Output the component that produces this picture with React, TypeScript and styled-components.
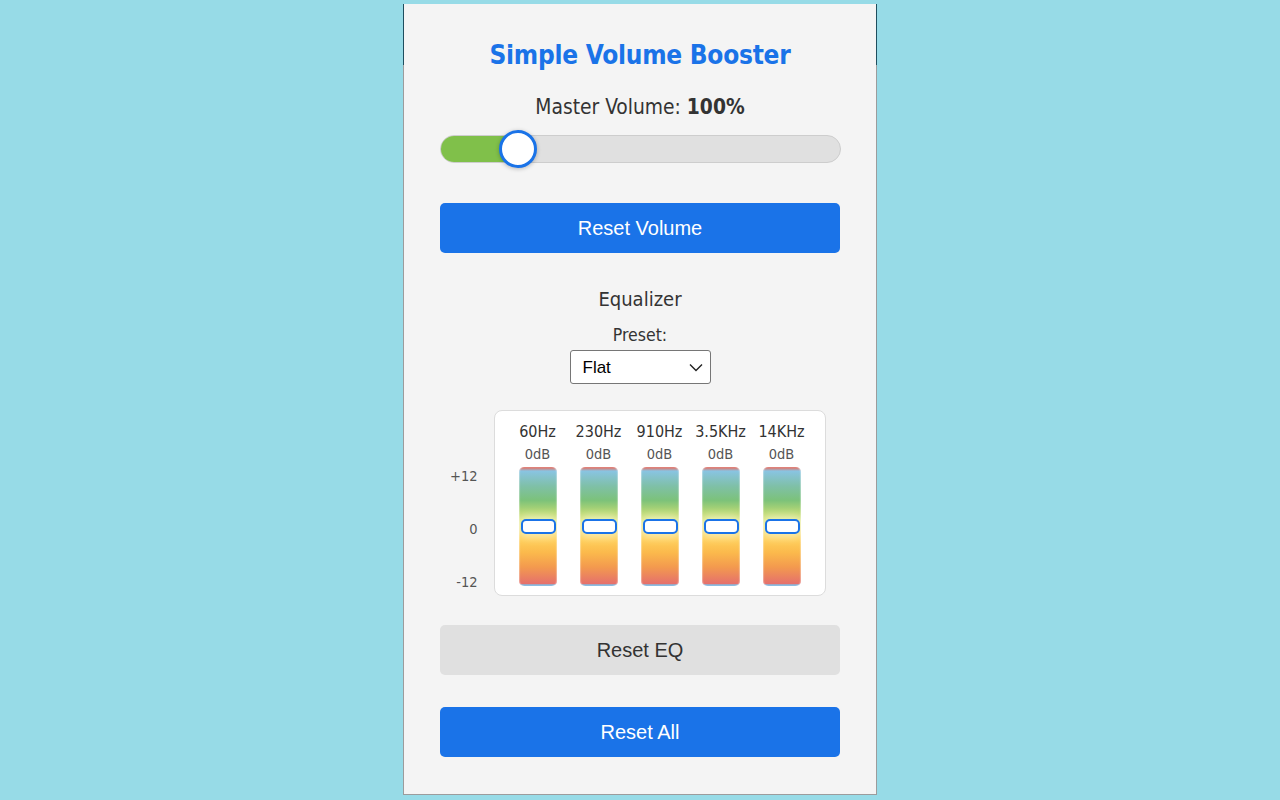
import { useState } from "react";
import styled, { createGlobalStyle } from "styled-components";

const GlobalStyle = createGlobalStyle`
  html, body {
    margin: 0;
    padding: 0;
    background: #97dbe7;
    height: 100%;
  }
  body {
    font-family: "DejaVu Sans Condensed", "DejaVu Sans", sans-serif;
  }
`;

const Page = styled.div`
  display: flex;
  justify-content: center;
  padding-top: 4px;
`;

const Panel = styled.div`
  position: relative;
  width: 400px;
  padding: 36px 36px 37px;
  background: #f4f4f4;
  border: 1px solid #9c9c9c;
  border-top: none;
  display: flex;
  flex-direction: column;
  align-items: center;

  &::before,
  &::after {
    content: "";
    position: absolute;
    top: 0;
    width: 1px;
    height: 61px;
    background: #1f4e5e;
  }
  &::before {
    left: -1px;
  }
  &::after {
    right: -1px;
  }
`;

const Title = styled.h1`
  margin: 0;
  height: 30px;
  line-height: 30px;
  font-size: 26px;
  font-weight: bold;
  color: #1a73e8;
  letter-spacing: -0.25px;
`;

const MasterLabel = styled.div`
  margin-top: 25px;
  height: 24px;
  line-height: 24px;
  font-size: 20.8px;
  color: #333;

  b {
    font-weight: bold;
  }
`;

const SliderWrap = styled.div`
  margin-top: 11px;
  width: 401px;
  height: 38px;
  display: flex;
  align-items: center;
  position: relative;
`;

const Track = styled.div`
  position: relative;
  width: 100%;
  height: 28px;
  box-sizing: border-box;
  border: 1px solid #cdcdcd;
  border-radius: 14px;
  background: #e0e0e0;
  overflow: hidden;
`;

const Fill = styled.div`
  height: 100%;
  background: #80c04a;
`;

const Knob = styled.div`
  position: absolute;
  top: 0;
  width: 38px;
  height: 38px;
  margin-left: -19px;
  box-sizing: border-box;
  border-radius: 50%;
  background: #fff;
  border: 3px solid #1a73e8;
  box-shadow: 0 1px 4px rgba(0, 0, 0, 0.25);
`;

const Button = styled.button<{ $variant?: "primary" | "secondary" }>`
  width: 100%;
  height: 50px;
  border: none;
  border-radius: 5px;
  font-family: "Liberation Sans", Arial, sans-serif;
  font-size: 20px;
  cursor: pointer;
  background: ${(p) => (p.$variant === "secondary" ? "#e0e0e0" : "#1a73e8")};
  color: ${(p) => (p.$variant === "secondary" ? "#333" : "#fff")};
  margin-top: ${(p) => (p.$variant === "secondary" ? "29px" : "32px")};
`;

const ResetVolume = styled(Button)`
  margin-top: 35px;
`;

const SectionTitle = styled.div`
  margin-top: 34px;
  height: 24px;
  line-height: 24px;
  font-size: 20px;
  color: #333;
`;

const PresetLabel = styled.label`
  margin-top: 14px;
  height: 20px;
  line-height: 20px;
  font-size: 17.5px;
  color: #333;
`;

const SelectWrap = styled.div`
  position: relative;
  margin-top: 5px;
  width: 141px;
  height: 34px;
`;

const Select = styled.select`
  width: 100%;
  height: 100%;
  appearance: none;
  box-sizing: border-box;
  border: 1px solid #767676;
  border-radius: 3px;
  background: #fff;
  padding: 0 12px;
  font-family: "Liberation Sans", Arial, sans-serif;
  font-size: 17px;
  color: #000;
  outline: none;
`;

const Chevron = styled.svg`
  position: absolute;
  right: 8px;
  top: 13px;
  pointer-events: none;
`;

const EqRow = styled.div`
  margin-top: 26px;
  margin-left: -3px;
  display: flex;
  gap: 16px;
  align-items: flex-start;
`;

const Scale = styled.div`
  margin-top: 57px;
  width: 26px;
  height: 124px;
  display: flex;
  flex-direction: column;
  justify-content: space-between;
  align-items: flex-end;
  font-size: 14.5px;
  color: #555;

  span {
    line-height: 18px;
  }
`;

const EqBox = styled.div`
  background: #fff;
  border: 1px solid #dcdcdc;
  border-radius: 8px;
  padding: 11px 18px 9px;
  display: flex;
  gap: 11px;
`;

const Band = styled.div`
  width: 50px;
  display: flex;
  flex-direction: column;
  align-items: center;
`;

const Freq = styled.div`
  height: 20px;
  line-height: 20px;
  font-size: 16px;
  color: #333;
  white-space: nowrap;
`;

const Gain = styled.div`
  margin-top: 4px;
  height: 16px;
  line-height: 16px;
  font-size: 14.5px;
  color: #555;
`;

const Bar = styled.div`
  position: relative;
  margin-top: 5px;
  width: 38px;
  height: 119px;
  border-radius: 5px;
  background: linear-gradient(
    to bottom,
    #dc7a72 0,
    #dc7a72 1px,
    #89c4e2 4px,
    #7fc0a8 16%,
    #7cc27a 28%,
    #b8d873 38%,
    #dfe46f 46%,
    #ffd25c 60%,
    #fbb94c 72%,
    #f39a4e 84%,
    #e5716c 98%,
    #84b9e0 99%
  );
  box-shadow: inset 1px 0 1px rgba(255, 255, 255, 0.35),
    inset -1px 0 1px rgba(255, 255, 255, 0.35);
`;

const BarThumb = styled.div`
  position: absolute;
  left: 2px;
  width: 35px;
  height: 15px;
  margin-top: -7.5px;
  box-sizing: border-box;
  background: #fff;
  border: 2px solid #1a73e8;
  border-radius: 5px;
  box-shadow: 0 0 8px 3px rgba(255, 255, 255, 0.55);
`;

const bands = ["60Hz", "230Hz", "910Hz", "3.5KHz", "14KHz"];

export default function App() {
  const [volume] = useState(100);
  const [gains] = useState([0, 0, 0, 0, 0]);
  const [preset, setPreset] = useState("flat");

  const pct = (volume / 500) * 100 - 0.3;

  return (
    <>
      <GlobalStyle />
      <Page>
        <Panel>
          <Title>Simple Volume Booster</Title>
          <MasterLabel>
            Master Volume: <b>{volume}%</b>
          </MasterLabel>
          <SliderWrap>
            <Track>
              <Fill style={{ width: `${pct}%` }} />
            </Track>
            <Knob style={{ left: `${pct}%` }} />
          </SliderWrap>
          <ResetVolume>Reset Volume</ResetVolume>

          <SectionTitle>Equalizer</SectionTitle>
          <PresetLabel htmlFor="preset">Preset:</PresetLabel>
          <SelectWrap>
            <Select
              id="preset"
              value={preset}
              onChange={(e) => setPreset(e.target.value)}
            >
              <option value="flat">Flat</option>
              <option value="bass">Bass Boost</option>
              <option value="vocal">Vocal</option>
              <option value="treble">Treble Boost</option>
            </Select>
            <Chevron width="14" height="9" viewBox="0 0 14 9">
              <path
                d="M1 1.5 L7 7.5 L13 1.5"
                fill="none"
                stroke="#222"
                strokeWidth="1.4"
              />
            </Chevron>
          </SelectWrap>

          <EqRow>
            <Scale>
              <span>+12</span>
              <span>0</span>
              <span>-12</span>
            </Scale>
            <EqBox>
              {bands.map((name, i) => (
                <Band key={name}>
                  <Freq>{name}</Freq>
                  <Gain>{gains[i]}dB</Gain>
                  <Bar>
                    <BarThumb
                      style={{ top: `${((12 - gains[i]) / 24) * 100}%` }}
                    />
                  </Bar>
                </Band>
              ))}
            </EqBox>
          </EqRow>

          <Button $variant="secondary">Reset EQ</Button>
          <Button>Reset All</Button>
        </Panel>
      </Page>
    </>
  );
}
